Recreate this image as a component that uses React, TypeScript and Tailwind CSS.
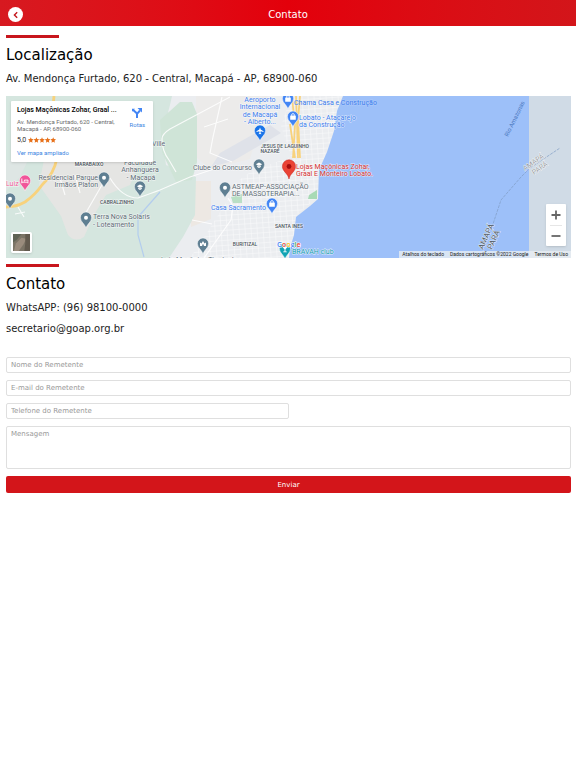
import { FormEventHandler, ReactNode } from "react";

type PinProps = {
    x: number;
    y: number;
    color?: string;
    children?: ReactNode;
};

// x / y is the tip of the pin
function Pin({ x, y, color = "#5f7f92", children }: PinProps) {
    return (
        <g transform={`translate(${x} ${y})`}>
            <path
                d="M0 0C-1.1-4-5.6-6-5.6-10.4a5.6 5.6 0 0 1 11.2 0C5.6-6 1.1-4 0 0Z"
                fill={color}
                stroke="#fff"
                strokeWidth=".5"
            />
            {children ?? <circle cy="-10.2" r="2" fill="#fff" />}
        </g>
    );
}

function Bag() {
    return (
        <>
            <rect x="-2.8" y="-11.4" width="5.6" height="4.2" rx=".5" fill="#fff" />
            <path
                d="M-1.4-11.2v-.8a1.4 1.4 0 0 1 2.8 0v.8"
                fill="none"
                stroke="#fff"
                strokeWidth=".8"
            />
        </>
    );
}

function Cap() {
    return (
        <path
            d="M-3.2-10.8 0-12.5l3.2 1.7L0-9.1ZM-1.8-9.4 0-8.4l1.8-1v1.5L0-6.9l-1.8-1Z"
            fill="#fff"
        />
    );
}

function Terrain() {
    return (
        <>
            <defs>
                <pattern
                    id="streets"
                    width="6"
                    height="5"
                    patternUnits="userSpaceOnUse"
                    patternTransform="rotate(-4)"
                >
                    <path d="M0 0H6M0 0V5" stroke="#fff" strokeWidth="1" opacity=".75" />
                </pattern>
            </defs>
            <rect x="6" y="96" width="565" height="162" fill="#ebedf0" />
            <path d="M196 96h72l-18 63-40 10-14-12Z" fill="#ecebea" />
            <path d="M220 153l50-28 11 8-48 28-22 6Z" fill="#dfe2e9" />
            <path d="M191 181l20 0 0 38-20 8Z" fill="#ede8e3" />
            <path
                d="M231 186l22-16 38-13-10-31 10-30h52l-15 54-10 47-21 18-7 43H190l20-30 20-32Z"
                fill="url(#streets)"
            />
            <path
                d="M6 96H172l-2 9-8 30 4 30 30 12-1 38-12 22-14 21H6Z"
                fill="#d5e6df"
            />
            <path
                d="M160 120l20-18 12 0 5 12v48l-5 18-16 2-14-30Z"
                fill="#cfe4d7"
            />
            <path
                d="M44 160l96 0-10 25-24 10-12 20-10 22q-9 6-16-2l-7-19-22-31Z"
                fill="#e5e5e3"
            />
            <path d="M6 191l14-14 8-17H6Z" fill="#dee6e4" />

            {/* roads */}
            <g fill="none" stroke="#fff" strokeWidth="1.2" opacity=".85">
                <path d="M110 178q12 20 28 20 14-5 22-8l30-13 30-10" />
                <path d="M162 139q0-5 8-10l60-32" />
                <path d="M162 139q0 12 7 21l7 12" />
                <path d="M222 97l-9 40-3 16 22 9M204 127l24-8" />
                <path d="M231 220l2-14-5-8M231 220l-27 38M192 220l20 4" />
                <path d="M60 178l5 17M75 175l5 18M84 216l22-38" />
                <path d="M18 207l6 10M15 214l10-2" />
            </g>
            <g fill="none" stroke="#f8d27c">
                <path d="M6 207q10 0 19-5 10-7 17-17 12-11 15-27M54 96l-1 10" strokeWidth="2.8" />
                <path
                    d="M292 96l1 11 2 18-2 33M296 96l1 28 1 34M300 96l-2 24 2 38M290 124l5 34"
                    strokeWidth="1.8"
                />
            </g>
            <path
                d="M160 192l-22 25 0 18 6 22"
                fill="none"
                stroke="#b3cdee"
                strokeWidth="1.2"
            />

            {/* river */}
            <path
                d="M343 96l-6 15-3 20-7 21-8 18-1 29-8 7-14 11-2 18-4 13-1 10H571V96Z"
                fill="#9dc0f9"
            />
            <rect x="529" y="96" width="42" height="162" fill="#d0dbe6" />
            <path d="M309 195l8-5v9h-9Z" fill="#a8dab5" />
            <path d="M231 197l11-3v9h-9Z" fill="#b9dfc5" />
            <path
                d="M492 227l9-27 20-23 9-9 30-20"
                fill="none"
                stroke="#7f9cc4"
                strokeWidth=".7"
                strokeDasharray="3 1"
            />
        </>
    );
}

function Labels() {
    return (
        <g
            fontFamily='Roboto, "Liberation Sans", sans-serif'
            fontSize="7"
            stroke="#fff"
            strokeWidth="1"
            strokeOpacity=".7"
            paintOrder="stroke"
        >
            <g fill="#5d6b74">
                <text x="152" y="146">Ville</text>
                <g textAnchor="middle">
                    <text x="140" y="165">Faculdade</text>
                    <text x="140" y="172">Anhanguera</text>
                    <text x="141" y="180">- Macapá</text>
                </g>
                <g textAnchor="end">
                    <text x="98" y="180">Residencial Parque</text>
                    <text x="98" y="187">Irmãos Platon</text>
                    <text x="252" y="170">Clube do Concurso</text>
                </g>
                <text x="93" y="219">Terra Nova Solaris</text>
                <text x="93" y="227">- Loteamento</text>
                <text x="232" y="189">ASTMEAP-ASSOCIAÇÃO</text>
                <text x="232" y="196">DE MASSOTERAPIA...</text>
                <text x="161" y="262">Loja Maçônica Tiradentes</text>
            </g>
            <g fill="#4b545b" fontSize="5" fontWeight="500" textAnchor="middle">
                <text x="89" y="166">MARABAIXO</text>
                <text x="117" y="204">CABRALZINHO</text>
                <text x="285" y="148">JESUS DE LAGUINHO</text>
                <text x="270" y="153">NAZARÉ</text>
                <text x="289" y="228">SANTA INES</text>
                <text x="245" y="246">BURITIZAL</text>
            </g>
            <g fill="#3b7ded">
                <g textAnchor="middle">
                    <text x="260" y="102">Aeroporto</text>
                    <text x="260" y="109">Internacional</text>
                    <text x="260" y="117">de Macapá</text>
                    <text x="260" y="124">- Alberto...</text>
                </g>
                <text x="294" y="105" strokeOpacity=".2">Chama Casa e Construção</text>
                <text x="299" y="120">Lobato - Atacarejo</text>
                <text x="299" y="127">da Construção</text>
                <text x="266" y="210" textAnchor="end">Casa Sacramento</text>
            </g>
            <g fill="#d32f2f">
                <text x="296" y="169">Lojas Maçônicas Zohar,</text>
                <text x="296" y="176">Graal E Monteiro Lobato.</text>
            </g>
            <text x="6" y="186" fill="#ee5b97">Luiz</text>
            <text x="292" y="254" fill="#129eaf">BRAVAH club</text>
            <text
                transform="translate(508 137) rotate(-64)"
                fontSize="6"
                strokeOpacity="0"
                fill="#4b78bf"
            >
                Rio Amazonas
            </text>
            <g fontSize="8" fill="#59636c">
                <text transform="translate(483 250) rotate(-66)">AMAPÁ</text>
                <text transform="translate(492 250) rotate(-66)">PARÁ</text>
            </g>
            <g fontSize="7" fill="#9c9fa3">
                <text transform="translate(525 171) rotate(-35)">AMAPÁ</text>
                <text transform="translate(534 175) rotate(-35)">PARÁ</text>
            </g>
        </g>
    );
}

function Pins() {
    return (
        <>
            <Pin x={10} y={209} />
            <Pin x={104} y={188} />
            <Pin x={86} y={228} />
            <Pin x={225} y={198} />
            <Pin x={259} y={175}>
                <Cap />
            </Pin>
            <Pin x={140} y={197}>
                <Cap />
            </Pin>
            <Pin x={203} y={254}>
                <path
                    d="M-3-8v-3.5l1.5 1L0-13l1.5 2.5 1.5-1V-8H.8v-1.6H-.8V-8Z"
                    fill="#fff"
                />
            </Pin>
            <Pin x={25} y={191} color="#f0559a">
                <path
                    d="M-3.2-12.5v4.8M-3.2-8.8h6.2v1.2M3-9.2v-1.7H-.6v1.4"
                    fill="none"
                    stroke="#fff"
                    strokeWidth=".9"
                />
            </Pin>
            <Pin x={260} y={141} color="#1a73e8">
                <path
                    d="M0-13.6l.7 2.1 2.8 1.7v.9l-2.8-.8-.2 1.7.8.7v.6L0-7l-1.3.3v-.6l.8-.7-.2-1.7-2.8.8v-.9l2.8-1.7Z"
                    fill="#fff"
                />
            </Pin>
            <Pin x={288} y={109} color="#4285f4">
                <Bag />
            </Pin>
            <Pin x={293} y={127} color="#4285f4">
                <Bag />
            </Pin>
            <Pin x={272} y={214} color="#4285f4">
                <Bag />
            </Pin>
            <Pin x={285} y={259} color="#12a4b4">
                <path d="M-3-12.5h6L.5-9.8v2.3h1.3v.7h-3.6v-.7h1.3v-2.3Z" fill="#fff" />
            </Pin>
            <g transform="translate(289 179)">
                <path
                    d="M0 0C-.8-5.5-6.6-7.5-6.6-12.6a6.6 6.6 0 0 1 13.2 0C6.6-7.5.8-5.5 0 0Z"
                    fill="#ea4335"
                    stroke="#c5221f"
                    strokeWidth=".5"
                />
                <circle cy="-12.5" r="2.4" fill="#a50e0e" />
            </g>
            <text
                x="277"
                y="247"
                fontFamily='"Open Sans", sans-serif'
                fontSize="7"
                fontWeight="600"
                stroke="#fff"
                strokeWidth="1"
                paintOrder="stroke"
            >
                <tspan fill="#4285f4">G</tspan>
                <tspan fill="#ea4335">o</tspan>
                <tspan fill="#fbbc05">o</tspan>
                <tspan fill="#4285f4">g</tspan>
                <tspan fill="#34a853">l</tspan>
                <tspan fill="#ea4335">e</tspan>
            </text>
        </>
    );
}

function PlaceCard() {
    return (
        <div className="absolute top-[5px] left-[5px] flex h-[61px] w-[142px] justify-between rounded-[1px] bg-white pt-1 pr-2 pl-[6px] shadow-sm">
            <div className="min-w-0 whitespace-nowrap">
                <p className="text-[7px] leading-[11px] font-medium text-black">
                    Lojas Maçônicas Zohar, Graal ...
                </p>
                <p className="mt-[2px] text-[6px] leading-[7px] text-[#6b6b6b]">
                    Av. Mendonça Furtado, 620 - Central,
                    <br />
                    Macapá - AP, 68900-060
                </p>
                <p className="mt-1 flex items-center text-[7px] leading-[8px] text-[#333]">
                    5,0
                    <svg viewBox="0 0 50 10" className="ml-[2px] h-[6px] w-[28px]">
                        {[0, 10, 20, 30, 40].map((x) => (
                            <path
                                key={x}
                                transform={`translate(${x} 0)`}
                                d="M5 0l1.4 3.4L10 3.8 7.3 6.2 8.1 10 5 8 1.9 10l.8-3.8L0 3.8l3.6-.4Z"
                                fill="#e7711b"
                            />
                        ))}
                    </svg>
                </p>
                <a href="#mapa" className="mt-1 block text-[6px] leading-[9px] text-[#3a84df]">
                    Ver mapa ampliado
                </a>
            </div>
            <a href="#rotas" className="flex flex-col items-center text-[6px] leading-[8px] text-[#3a84df]">
                <svg viewBox="0 0 12 12" className="mt-[2px] mb-[2px] size-[12px]">
                    <path
                        d="M6 11V6.5L2.2 3M6 6.8l3-3.3"
                        fill="none"
                        stroke="#4285f4"
                        strokeWidth="2"
                    />
                    <path d="M6.5 1H11v4.5Z" fill="#4285f4" />
                    <path d="M1 1.8l3 0-3 3Z" fill="#4285f4" />
                </svg>
                Rotas
            </a>
        </div>
    );
}

function Map() {
    return (
        <div
            id="mapa"
            className="relative mt-[10px] h-[162px] overflow-hidden bg-[#ebedf0] font-[Roboto,'Liberation_Sans',sans-serif]"
        >
            <svg
                viewBox="6 96 565 162"
                preserveAspectRatio="xMidYMid slice"
                className="block h-full w-full"
            >
                <Terrain />
                <Pins />
                <Labels />
            </svg>

            <PlaceCard />

            <button
                type="button"
                aria-label="Satélite"
                className="absolute bottom-[5px] left-[5px] size-[21px] overflow-hidden rounded-[2px] border-2 border-white shadow-sm"
            >
                <svg viewBox="0 0 18 18" className="block size-full">
                    <rect width="18" height="18" fill="#7b7466" />
                    <path d="M0 0h9L4 6 0 9Z" fill="#5f6355" />
                    <path d="M3 10l6-6 5 1-3 6-5 7H1Z" fill="#9a8c7d" />
                    <path d="M13 0h5v18h-6l1-8Z" fill="#625a4e" />
                </svg>
            </button>

            <div className="absolute right-[5px] bottom-3 flex w-[20px] flex-col rounded-[1px] bg-white shadow-sm">
                <button type="button" aria-label="Aumentar" className="flex h-[21px] items-center justify-center">
                    <svg viewBox="0 0 10 10" className="size-[10px]">
                        <path d="M5 0.5v9M.5 5h9" stroke="#666" strokeWidth="1.8" />
                    </svg>
                </button>
                <span className="mx-1 h-px bg-[#e6e6e6]" />
                <button type="button" aria-label="Diminuir" className="flex h-[20px] items-center justify-center">
                    <svg viewBox="0 0 10 10" className="size-[10px]">
                        <path d="M.5 5h9" stroke="#666" strokeWidth="1.8" />
                    </svg>
                </button>
            </div>

            <div className="absolute right-0 bottom-0 flex h-[7px] items-center gap-[6px] bg-[#e8edf3]/80 px-[3px] text-[5px] leading-[7px] text-[#222]">
                <button type="button">Atalhos do teclado</button>
                <span>Dados cartográficos ©2022 Google</span>
                <a href="#termos">Termos de Uso</a>
            </div>
        </div>
    );
}

const fieldClass =
    "block w-full rounded-[2px] border border-[#dfdfdf] bg-white px-1 text-[7px] text-[#555] outline-none placeholder:text-[#999]";

export default function App() {
    const submit: FormEventHandler = (e) => {
        e.preventDefault();
    };

    return (
        <div className="bg-white font-['DejaVu_Sans',sans-serif] text-[#222]">
            <header className="relative flex h-[26px] items-center justify-center bg-linear-to-r from-[#d71920] via-[#e3000b] to-[#d3151a] pt-[3px]">
                <a
                    href="#voltar"
                    aria-label="Voltar"
                    className="absolute top-[7px] left-2 flex size-[15px] items-center justify-center rounded-full bg-white"
                >
                    <svg viewBox="0 0 8 8" className="size-[8px]">
                        <path d="M5.2 1.2 2.4 4l2.8 2.8" fill="none" stroke="#c4181d" strokeWidth="1.4" />
                    </svg>
                </a>
                <h1 className="text-[10px] leading-[14px] text-white">Contato</h1>
            </header>

            <main className="pt-[9px] pr-[5px] pb-4 pl-[6px]">
                <section>
                    <div className="h-[3px] w-[53px] bg-[#c8161d]" />
                    <h2 className="mt-2 text-[15px] leading-[18px] text-black">Localização</h2>
                    <p className="mt-2 text-[10px] leading-[14px]">
                        Av. Mendonça Furtado, 620 - Central, Macapá - AP, 68900-060
                    </p>
                    <Map />
                </section>

                <section className="pt-[6px]">
                    <div className="h-[3px] w-[53px] bg-[#c8161d]" />
                    <h2 className="mt-2 text-[15px] leading-[18px] text-black">Contato</h2>
                    <p className="mt-2 text-[10px] leading-[14px]">WhatsAPP: (96) 98100-0000</p>
                    <p className="mt-[7px] text-[10px] leading-[14px]">secretario@goap.org.br</p>
                </section>

                <form onSubmit={submit} className="mt-[21px] space-y-[7px]">
                    <input
                        type="text"
                        aria-label="Nome do Remetente"
                        placeholder="Nome do Remetente"
                        className={`${fieldClass} h-[16px]`}
                    />
                    <input
                        type="email"
                        aria-label="E-mail do Remetente"
                        placeholder="E-mail do Remetente"
                        className={`${fieldClass} h-[16px]`}
                    />
                    <div className="w-1/2">
                        <input
                            type="tel"
                            aria-label="Telefone do Remetente"
                            placeholder="Telefone do Remetente"
                            className={`${fieldClass} h-[16px]`}
                        />
                    </div>
                    <textarea
                        aria-label="Mensagem"
                        placeholder="Mensagem"
                        className={`${fieldClass} h-[43px] resize-none pt-[2px] leading-[10px]`}
                    />
                    <button
                        type="submit"
                        className="block h-[17px] w-full rounded-[2px] bg-[#d3151a] text-[7px] leading-[10px] text-white"
                    >
                        Enviar
                    </button>
                </form>
            </main>
        </div>
    );
}
